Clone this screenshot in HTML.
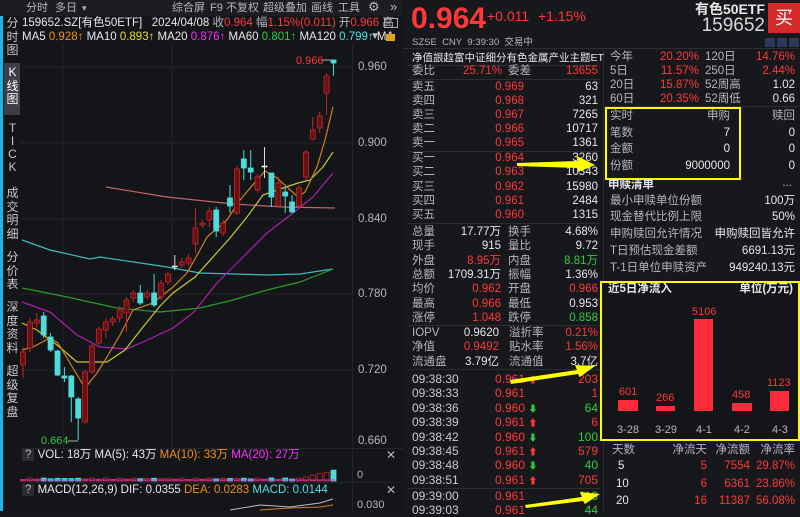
<!DOCTYPE html>
<html><head><meta charset="utf-8"><style>
*{margin:0;padding:0;box-sizing:border-box}
body{width:800px;height:511px;background:#151619;overflow:hidden;position:relative;font-family:"Liberation Sans","Noto Sans CJK SC",sans-serif;color:#e4e4e4}
.t{position:absolute;white-space:nowrap;font-size:11.5px;line-height:14px}
.g{color:#b4b7bd}.r{color:#ff3838}.gr{color:#2fcc3f}.w{color:#e8e8e8}.y{color:#e0e030}.o{color:#f0901e}.m{color:#ff30ff}.c{color:#50e0e0}
.ln{position:absolute;background:#2c2e34}
.vt{position:absolute;left:5px;width:15px;text-align:center;font-size:12px;line-height:13.5px;color:#c8c8c8}
.tk{font-size:12px}
.tb{font-size:11px;top:1px}
</style></head><body>
<div style="position:absolute;left:0;top:0;width:403px;height:511px;background:#141519"></div>
<div style="position:absolute;left:0;top:0;width:403px;height:16px;background:#1c1d21"></div>
<div style="position:absolute;left:0;top:16px;width:3px;height:495px;background:#1eb4e6"></div>
<div class="t g tb" style="left:26px">分时</div>
<div class="t g tb" style="left:55px">多日</div>
<div class="t g" style="left:82px;top:1px;font-size:9px">▾</div>
<div class="t g tb" style="left:172px">综合屏</div>
<div class="t g tb" style="left:210px">F9</div>
<div class="t g tb" style="left:226px">不复权</div>
<div class="t g tb" style="left:263px">超级叠加</div>
<div class="t g tb" style="left:311px">画线</div>
<div class="t g tb" style="left:338px">工具</div>
<div class="t g" style="left:368px;top:0px;font-size:13px">⚙</div>
<div class="t g" style="left:390px;top:0px;font-size:13px">»</div>
<div class="t w" style="left:22px;top:16px;font-size:11.5px">159652.SZ[有色50ETF]&nbsp;&nbsp; 2024/04/08 <span class="g">收</span><span class="r">0.964</span> <span class="g">幅</span><span class="r">1.15%(0.011)</span> <span class="g">开</span><span class="r">0.966</span> <span class="g">高</span></div>
<div style="position:absolute;left:384px;top:18px;width:14px;height:10px;border:1px solid #aaa"></div>
<div class="t w" style="left:22px;top:30px;font-size:11.5px">MA5 <span class="o">0.928↑</span> MA10 <span class="y">0.893↑</span> MA20 <span class="m">0.876↑</span> MA60 <span class="gr">0.801↑</span> MA120 <span class="c">0.799↑</span> MA</div>
<div class="t g" style="left:370px;top:30px;font-size:10px">▼</div>
<div style="position:absolute;left:386px;top:34px;width:9px;height:7px;background:#e0a020"></div>
<div class="vt" style="top:17px">分<br>时<br>图</div>
<div style="position:absolute;left:4px;top:63px;width:16px;height:52px;background:#3c3f46"></div>
<div class="vt" style="top:66px;color:#fff">K<br>线<br>图</div>
<div class="vt" style="top:122px;line-height:13px">T<br>I<br>C<br>K</div>
<div class="vt" style="top:187px">成<br>交<br>明<br>细</div>
<div class="vt" style="top:251px">分<br>价<br>表</div>
<div class="vt" style="top:301px">深<br>度<br>资<br>料</div>
<div class="vt" style="top:365px">超<br>级<br>复<br>盘</div>
<div class="t g" style="left:358px;top:60px">0.960</div>
<div class="t g" style="left:358px;top:136px">0.900</div>
<div class="t g" style="left:358px;top:212px">0.840</div>
<div class="t g" style="left:358px;top:287px">0.780</div>
<div class="t g" style="left:358px;top:363px">0.720</div>
<div class="t g" style="left:358px;top:434px">0.660</div>
<div class="t r" style="left:296px;top:54px;font-size:11px">0.966</div>
<div class="t gr" style="left:41px;top:434px;font-size:11px">0.664</div>
<svg width="403" height="511" style="position:absolute;left:0;top:0">
<g stroke="#23252a" stroke-width="1">
<line x1="20" y1="67" x2="352" y2="67"/><line x1="20" y1="143" x2="352" y2="143"/><line x1="20" y1="219" x2="352" y2="219"/><line x1="20" y1="294" x2="352" y2="294"/><line x1="20" y1="370" x2="352" y2="370"/>
<line x1="63" y1="44" x2="63" y2="448"/><line x1="172" y1="44" x2="172" y2="448"/><line x1="352.5" y1="44" x2="352.5" y2="511"/>
<line x1="20" y1="448.5" x2="403" y2="448.5"/><line x1="20" y1="482.5" x2="403" y2="482.5"/>
</g>
<line x1="322" y1="60" x2="333" y2="60" stroke="#aaa"/>
<line x1="68" y1="441" x2="78" y2="441" stroke="#aaa"/>
<g fill="none" stroke-width="1.2">
<polyline stroke="#c06464" points="106,187 167,197 233,204 283,207 335,208"/>
<polyline stroke="#3cbcbc" points="22,240 50,250 90,259 100,257 167,267 200,273 267,275 300,274 333,269"/>
<polyline stroke="#2a9a2a" points="22,288 67,297 117,308 160,312 200,308 233,300 267,290 300,282 333,269"/>
<polyline stroke="#b020b0" points="22,302 50,312 77,335 100,347 127,349 143,342 173,328 193,313 217,283 240,260 267,233 293,213 313,197 333,173"/>
<polyline stroke="#c8c830" points="22,323 37,330 57,345 77,362 90,362 107,362 125,350 143,327 160,306 173,293 195,277 230,238 247,217 263,195 283,188 298,183 310,180 323,167 333,152"/>
<polyline stroke="#d08020" points="22,350 33,347 50,338 58,343 70,363 85,388 97,373 107,357 120,335 133,310 153,303 173,287 187,273 200,250 207,237 227,220 240,200 257,180 265,171 277,178 287,187 298,197 305,192 317,167 325,140 333,107"/>
</g>
<g id="cd"></g>
<g id="vol"></g>
<polyline fill="none" stroke="#bbb" stroke-width="1" points="230,510 260,505 290,507 320,503 333,499"/>
<polyline fill="none" stroke="#d08020" stroke-width="1" points="260,510 290,508 320,507 333,505"/>
</svg>
<div class="t w" style="left:22px;top:449px;font-size:11.5px;line-height:13px"><span style="background:#2a2c31;padding:0 3px" class="g">?</span> VOL: 18万 MA(5): 43万 <span class="o">MA(10): 33万</span> <span class="m">MA(20): 27万</span></div>
<div class="t g" style="left:386px;top:448px;font-size:12px">✕</div>
<div class="t g" style="left:357px;top:468px;font-size:11px">0</div>
<div class="t w" style="left:22px;top:484px;font-size:11.5px;line-height:13px"><span style="background:#2a2c31;padding:0 3px" class="g">?</span> MACD(12,26,9) DIF: 0.0355 <span class="o">DEA: 0.0283</span> <span class="c">MACD: 0.0144</span></div>
<div class="t g" style="left:386px;top:483px;font-size:12px">✕</div>
<div class="t g" style="left:357px;top:498px;font-size:11px">0.030</div>

<div style="position:absolute;left:403px;top:0;width:397px;height:511px;background:#17181c"></div>
<div class="t r" style="left:411px;top:2px;font-size:30px;line-height:34px;font-weight:bold">0.964</div>
<div class="t r" style="left:487px;top:9px;font-size:14px">+0.011</div>
<div class="t r" style="left:538px;top:9px;font-size:14px">+1.15%</div>
<div class="t w" style="right:35px;top:2px;font-size:14px;font-weight:bold">有色50ETF</div>
<div class="t" style="right:35px;top:16px;font-size:19px;line-height:20px;color:#d8d8d8">159652</div>
<div style="position:absolute;left:768px;top:3px;width:32px;height:30px;background:#d42a2a;color:#fff;font-size:18px;text-align:center;line-height:30px">买</div>
<div class="t g" style="left:412px;top:37px;font-size:9.5px;line-height:11px">SZSE&nbsp; CNY&nbsp; 9:39:30&nbsp; 交易中</div>
<div style="position:absolute;left:765px;top:38px;width:10px;height:9px;background:#2a3a5a"></div>
<div style="position:absolute;left:777px;top:38px;width:10px;height:9px;background:#2a3a5a"></div>
<div style="position:absolute;left:789px;top:38px;width:10px;height:9px;background:#2a3a5a"></div>
<div class="ln" style="left:403px;top:48px;width:397px;height:1px"></div>
<div class="ln" style="left:603px;top:48px;width:1px;height:463px"></div>
<div class="t w" style="left:412px;top:51px;font-size:10.5px">净值詪趇富中证细分有色金属产业主题ET</div>
<div class="ln" style="left:408px;top:65px;width:192px;height:1px"></div>
<div class="t g" style="left:412px;top:64px">委比</div><div class="t r" style="right:298px;top:64px">25.71%</div><div class="t g" style="left:508px;top:64px">委差</div><div class="t r" style="right:202px;top:64px">13655</div>
<div class="ln" style="left:408px;top:79px;width:192px;height:1px"></div>
<div class="t g" style="left:412px;top:80px">卖五</div><div class="t r" style="right:276px;top:80px">0.969</div><div class="t w" style="right:202px;top:80px">63</div>
<div class="t g" style="left:412px;top:94px">卖四</div><div class="t r" style="right:276px;top:94px">0.968</div><div class="t w" style="right:202px;top:94px">321</div>
<div class="t g" style="left:412px;top:108px">卖三</div><div class="t r" style="right:276px;top:108px">0.967</div><div class="t w" style="right:202px;top:108px">7265</div>
<div class="t g" style="left:412px;top:122px">卖二</div><div class="t r" style="right:276px;top:122px">0.966</div><div class="t w" style="right:202px;top:122px">10717</div>
<div class="t g" style="left:412px;top:136px">卖一</div><div class="t r" style="right:276px;top:136px">0.965</div><div class="t w" style="right:202px;top:136px">1361</div>
<div class="ln" style="left:408px;top:151px;width:192px;height:1px"></div>
<div class="t g" style="left:412px;top:151px">买一</div><div class="t r" style="right:276px;top:151px">0.964</div><div class="t w" style="right:202px;top:151px">3260</div>
<div class="t g" style="left:412px;top:165px">买二</div><div class="t r" style="right:276px;top:165px">0.963</div><div class="t w" style="right:202px;top:165px">10343</div>
<div class="t g" style="left:412px;top:180px">买三</div><div class="t r" style="right:276px;top:180px">0.962</div><div class="t w" style="right:202px;top:180px">15980</div>
<div class="t g" style="left:412px;top:194px">买四</div><div class="t r" style="right:276px;top:194px">0.961</div><div class="t w" style="right:202px;top:194px">2484</div>
<div class="t g" style="left:412px;top:208px">买五</div><div class="t r" style="right:276px;top:208px">0.960</div><div class="t w" style="right:202px;top:208px">1315</div>
<div class="ln" style="left:408px;top:223px;width:192px;height:1px"></div>
<div class="t g" style="left:412px;top:225px">总量</div><div class="t w" style="right:299px;top:225px">17.77万</div><div class="t g" style="left:508px;top:225px">换手</div><div class="t w" style="right:202px;top:225px">4.68%</div>
<div class="t g" style="left:412px;top:239px">现手</div><div class="t w" style="right:299px;top:239px">915</div><div class="t g" style="left:508px;top:239px">量比</div><div class="t w" style="right:202px;top:239px">9.72</div>
<div class="t g" style="left:412px;top:254px">外盘</div><div class="t r" style="right:299px;top:254px">8.95万</div><div class="t g" style="left:508px;top:254px">内盘</div><div class="t gr" style="right:202px;top:254px">8.81万</div>
<div class="t g" style="left:412px;top:268px">总额</div><div class="t w" style="right:299px;top:268px">1709.31万</div><div class="t g" style="left:508px;top:268px">振幅</div><div class="t w" style="right:202px;top:268px">1.36%</div>
<div class="t g" style="left:412px;top:282px">均价</div><div class="t r" style="right:299px;top:282px">0.962</div><div class="t g" style="left:508px;top:282px">开盘</div><div class="t r" style="right:202px;top:282px">0.966</div>
<div class="t g" style="left:412px;top:297px">最高</div><div class="t r" style="right:299px;top:297px">0.966</div><div class="t g" style="left:508px;top:297px">最低</div><div class="t w" style="right:202px;top:297px">0.953</div>
<div class="t g" style="left:412px;top:311px">涨停</div><div class="t r" style="right:299px;top:311px">1.048</div><div class="t g" style="left:508px;top:311px">跌停</div><div class="t gr" style="right:202px;top:311px">0.858</div>
<div class="ln" style="left:408px;top:325px;width:192px;height:1px"></div>
<div class="t g" style="left:412px;top:326px">IOPV</div><div class="t w" style="right:301px;top:326px">0.9620</div><div class="t g" style="left:509px;top:326px">溢折率</div><div class="t r" style="right:202px;top:326px">0.21%</div>
<div class="t g" style="left:412px;top:340px">净值</div><div class="t r" style="right:301px;top:340px">0.9492</div><div class="t g" style="left:509px;top:340px">贴水率</div><div class="t r" style="right:202px;top:340px">1.56%</div>
<div class="t g" style="left:412px;top:355px">流通盘</div><div class="t w" style="right:301px;top:355px">3.79亿</div><div class="t g" style="left:509px;top:355px">流通值</div><div class="t w" style="right:202px;top:355px">3.7亿</div>
<div class="ln" style="left:408px;top:369px;width:192px;height:1px"></div>
<div class="t tk" style="left:412px;top:372px;color:#ccc">09:38:30</div><div class="t tk r" style="left:495px;top:372px">0.961 <span style="font-size:9px">⬆</span></div><div class="t tk r" style="right:202px;top:372px">203</div>
<div class="t tk" style="left:412px;top:386px;color:#ccc">09:38:33</div><div class="t tk r" style="left:495px;top:386px">0.961</div><div class="t tk r" style="right:202px;top:386px">1</div>
<div class="t tk" style="left:412px;top:401px;color:#ccc">09:38:36</div><div class="t tk r" style="left:495px;top:401px">0.960 <span class="gr" style="font-size:9px">⬇</span></div><div class="t tk gr" style="right:202px;top:401px">64</div>
<div class="t tk" style="left:412px;top:415px;color:#ccc">09:38:39</div><div class="t tk r" style="left:495px;top:415px">0.961 <span style="font-size:9px">⬆</span></div><div class="t tk r" style="right:202px;top:415px">6</div>
<div class="t tk" style="left:412px;top:430px;color:#ccc">09:38:42</div><div class="t tk r" style="left:495px;top:430px">0.960 <span class="gr" style="font-size:9px">⬇</span></div><div class="t tk gr" style="right:202px;top:430px">100</div>
<div class="t tk" style="left:412px;top:444px;color:#ccc">09:38:45</div><div class="t tk r" style="left:495px;top:444px">0.961 <span style="font-size:9px">⬆</span></div><div class="t tk r" style="right:202px;top:444px">579</div>
<div class="t tk" style="left:412px;top:458px;color:#ccc">09:38:48</div><div class="t tk r" style="left:495px;top:458px">0.960 <span class="gr" style="font-size:9px">⬇</span></div><div class="t tk gr" style="right:202px;top:458px">40</div>
<div class="t tk" style="left:412px;top:473px;color:#ccc">09:38:51</div><div class="t tk r" style="left:495px;top:473px">0.961 <span style="font-size:9px">⬆</span></div><div class="t tk r" style="right:202px;top:473px">705</div>
<div class="ln" style="left:408px;top:488px;width:192px;height:1px"></div>
<div class="t tk" style="left:412px;top:489px;color:#ccc">09:39:00</div><div class="t tk r" style="left:495px;top:489px">0.961</div><div class="t tk gr" style="right:202px;top:489px">113</div>
<div class="t tk" style="left:412px;top:503px;color:#ccc">09:39:03</div><div class="t tk r" style="left:495px;top:503px">0.961</div><div class="t tk gr" style="right:202px;top:503px">44</div>
<div class="t g" style="left:610px;top:50px">今年</div><div class="t r" style="right:101px;top:50px">20.20%</div><div class="t g" style="left:705px;top:50px">120日</div><div class="t r" style="right:5px;top:50px">14.76%</div>
<div class="t g" style="left:610px;top:64px">5日</div><div class="t r" style="right:101px;top:64px">11.57%</div><div class="t g" style="left:705px;top:64px">250日</div><div class="t r" style="right:5px;top:64px">2.44%</div>
<div class="t g" style="left:610px;top:78px">20日</div><div class="t r" style="right:101px;top:78px">15.87%</div><div class="t g" style="left:705px;top:78px">52周高</div><div class="t w" style="right:5px;top:78px">1.02</div>
<div class="t g" style="left:610px;top:92px">60日</div><div class="t r" style="right:101px;top:92px">20.35%</div><div class="t g" style="left:705px;top:92px">52周低</div><div class="t w" style="right:5px;top:92px">0.66</div>
<div class="ln" style="left:604px;top:106px;width:196px;height:1px"></div>
<div style="position:absolute;left:605px;top:107px;width:136px;height:73px;border:2px solid #ffff00"></div>
<div class="t g" style="left:610px;top:109px">实时</div><div class="t g" style="right:70px;top:109px">申购</div><div class="t g" style="right:5px;top:109px">赎回</div>
<div class="t g" style="left:610px;top:126px">笔数</div><div class="t w" style="right:70px;top:126px">7</div><div class="t w" style="right:5px;top:126px">0</div>
<div class="t g" style="left:610px;top:142px">金额</div><div class="t w" style="right:70px;top:142px">0</div><div class="t w" style="right:5px;top:142px">0</div>
<div class="t g" style="left:610px;top:159px">份额</div><div class="t w" style="right:70px;top:159px">9000000</div><div class="t w" style="right:5px;top:159px">0</div>
<div class="t w" style="left:608px;top:178px;font-weight:bold">申赎清单</div><div class="t g" style="right:8px;top:176px">...</div>
<div class="t g" style="left:610px;top:194px">最小申赎单位份额</div><div class="t w" style="right:5px;top:194px">100万</div>
<div class="t g" style="left:610px;top:210px">现金替代比例上限</div><div class="t w" style="right:5px;top:210px">50%</div>
<div class="t g" style="left:610px;top:227px">申购赎回允许情况</div><div class="t w" style="right:5px;top:227px">申购赎回皆允许</div>
<div class="t g" style="left:610px;top:244px">T日预估现金差额</div><div class="t w" style="right:5px;top:244px">6691.13元</div>
<div class="t g" style="left:610px;top:261px">T-1日单位申赎资产</div><div class="t w" style="right:5px;top:261px">949240.13元</div>
<div style="position:absolute;left:600px;top:281px;width:200px;height:160px;border:2px solid #ffff00;background:#141519"></div>
<div class="t w" style="left:608px;top:282px;font-weight:bold">近5日净流入</div><div class="t w" style="right:7px;top:282px;font-weight:bold">单位(万元)</div>
<div style="position:absolute;left:618px;top:400px;width:20px;height:11px;background:#ff2a3a"></div>
<div style="position:absolute;left:656px;top:406px;width:19px;height:5px;background:#ff2a3a"></div>
<div style="position:absolute;left:694px;top:319px;width:19px;height:92px;background:#ff2a3a"></div>
<div style="position:absolute;left:732px;top:403px;width:20px;height:8px;background:#ff2a3a"></div>
<div style="position:absolute;left:770px;top:391px;width:19px;height:20px;background:#ff2a3a"></div>
<div class="t r" style="left:619px;top:385px;font-size:11px">601</div>
<div class="t r" style="left:656px;top:391px;font-size:11px">266</div>
<div class="t r" style="left:692px;top:305px;font-size:11px">5106</div>
<div class="t r" style="left:732px;top:388px;font-size:11px">458</div>
<div class="t r" style="left:767px;top:376px;font-size:11px">1123</div>
<div class="t g" style="left:617px;top:423px;font-size:11px">3-28</div>
<div class="t g" style="left:655px;top:423px;font-size:11px">3-29</div>
<div class="t g" style="left:696px;top:423px;font-size:11px">4-1</div>
<div class="t g" style="left:734px;top:423px;font-size:11px">4-2</div>
<div class="t g" style="left:772px;top:423px;font-size:11px">4-3</div>
<div class="t g" style="left:612px;top:443px">天数</div><div class="t g" style="right:93px;top:443px">净流天</div><div class="t g" style="right:50px;top:443px">净流额</div><div class="t g" style="right:5px;top:443px">净流率</div>
<div class="t w" style="left:618px;top:459px">5</div><div class="t r" style="right:93px;top:459px">5</div><div class="t r" style="right:50px;top:459px">7554</div><div class="t r" style="right:5px;top:459px">29.87%</div>
<div class="t w" style="left:616px;top:477px">10</div><div class="t r" style="right:93px;top:477px">6</div><div class="t r" style="right:50px;top:477px">6361</div><div class="t r" style="right:5px;top:477px">23.86%</div>
<div class="t w" style="left:616px;top:494px">20</div><div class="t r" style="right:93px;top:494px">16</div><div class="t r" style="right:50px;top:494px">11387</div><div class="t r" style="right:5px;top:494px">56.08%</div>
<svg width="800" height="511" style="position:absolute;left:0;top:0">
<polygon fill="#ffff00" points="517,163 578,161 577,156 595,165 578,172 578,168 517,166"/>
<polygon fill="#ffff00" points="510,380 577,370 575,365 595,366 580,377 578,374 511,384"/>
<polygon fill="#ffff00" points="525,505 582,497 580,492 600,494 585,504 583,501 526,508"/>
</svg>
<script>
(function(){
var d=[[352,365,347,378,'r'],[322,348,318,352,'r'],[320,323,313,328,'r'],[316,335,312,338,'c'],[337,350,333,352,'c'],[351,375,350,376,'c'],[376,378,367,382,'c'],[376,397,375,422,'c'],[399,418,397,440,'c'],[372,422,370,424,'r'],[346,372,344,374,'r'],[329,343,327,345,'r'],[322,330,318,338,'r'],[319,322,316,326,'r'],[310,318,306,322,'r'],[300,313,297,332,'r'],[293,298,290,302,'r'],[293,303,285,305,'c'],[293,297,290,300,'r'],[293,305,274,307,'c'],[283,297,280,300,'r'],[274,282,272,285,'r'],[266,267,255,270,'w'],[262,265,258,268,'r'],[258,263,254,266,'r'],[228,244,208,253,'r'],[223,225,220,228,'r'],[211,220,207,227,'r'],[210,231,207,237,'c'],[223,233,220,236,'r'],[198,206,185,213,'c'],[169,213,166,215,'r'],[159,168,150,180,'c'],[168,172,150,180,'c'],[177,190,174,193,'r'],[166,167,147,178,'w'],[173,197,173,207,'c'],[183,206,177,207,'r'],[192,196,187,213,'c'],[202,212,195,213,'c'],[188,206,185,208,'r'],[152,177,150,180,'r'],[130,139,117,140,'r'],[116,128,112,133,'r'],[76,93,73,115,'r'],[60,63,60,76,'c']];
var v='',s='';
for(var i=0;i<d.length;i++){var a=d[i];var x=23+i*6.9;var col=a[4]=='r'?'#c02828':a[4]=='c'?'#50dada':'#ddd';var f=a[4]=='r'?'#6a1010':col;
s+='<line x1="'+x+'" y1="'+a[2]+'" x2="'+x+'" y2="'+a[3]+'" stroke="'+col+'"/>';
s+='<rect x="'+(x-2.5)+'" y="'+a[0]+'" width="5" height="'+Math.max(1,a[1]-a[0])+'" fill="'+f+'" stroke="'+col+'" stroke-width="0.8"/>';
var h=1.5+Math.abs(Math.sin(i*1.7))*1.5+(i>40?(i-40)*1.6:0);
v+='<rect x="'+(x-2.5)+'" y="'+(481-h)+'" width="5" height="'+h+'" fill="'+(a[4]=='c'?'#50dada':'none')+'" stroke="'+(a[4]=='c'?'#50dada':'#c02828')+'" stroke-width="0.8"/>';}
v+='<line x1="20" y1="480" x2="335" y2="480" stroke="#d030d0"/>';
document.getElementById('cd').innerHTML=s;document.getElementById('vol').innerHTML=v;})();
</script>
</body></html>
